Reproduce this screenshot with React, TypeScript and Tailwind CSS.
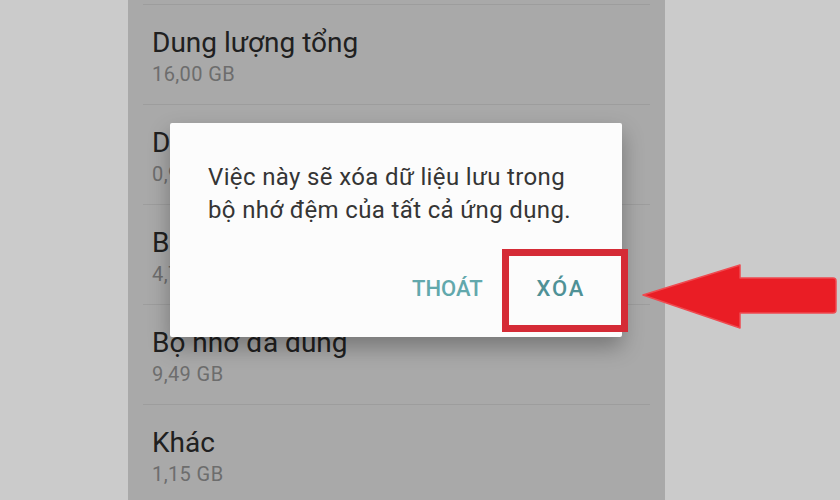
const rows = [
  { title: 'Dung lượng tổng', value: '16,00 GB' },
  { title: 'Dữ liệu bộ nhớ đệm', value: '0,95 GB' },
  { title: 'Bộ nhớ khả dụng', value: '4,71 GB' },
  { title: 'Bộ nhớ đã dùng', value: '9,49 GB' },
  { title: 'Khác', value: '1,15 GB' },
];

function StorageRow({ title, value }: { title: string; value: string }) {
  return (
    <div className="h-[100px] border-b border-[#9d9d9d] pl-[9px] pt-[22px]">
      <div className="text-[28px] leading-[32px] text-[#202020]">{title}</div>
      <div className="mt-[3px] text-[20px] leading-[24px] tracking-[0.02em] text-[#6d6d6d]">{value}</div>
    </div>
  );
}

function ClearCacheDialog() {
  return (
    <div className="absolute left-[42px] top-[123px] h-[214px] w-[452px] rounded-[2px] bg-[#fcfcfc] pl-[38px] pt-[38px] shadow-[0_10px_22px_rgba(0,0,0,0.3)]">
      <p className="text-[24px] leading-[33px] tracking-[0.015em] text-[#353535]">
        Việc này sẽ xóa dữ liệu lưu trong
        <br />
        bộ nhớ đệm của tất cả ứng dụng.
      </p>
      <div className="mt-[50px] flex justify-end gap-[54px] pr-[37px] text-[22px] font-medium leading-[24px]">
        <button type="button" className="text-[#62a8ac]">
          THOÁT
        </button>
        <button type="button" className="tracking-[0.08em] text-[#4f9196]">
          XÓA
        </button>
      </div>
    </div>
  );
}

export default function App() {
  return (
    <div
      className="relative flex h-[500px] w-[840px] overflow-hidden bg-[#cbcbcb]"
      style={{ fontFamily: 'Roboto, "Noto Sans", sans-serif' }}
    >
      <div className="w-[128px] shrink-0" />

      {/* Phone screen, dimmed behind the dialog. */}
      <div className="relative w-[537px] shrink-0 bg-[#a9a9a9]">
        <div className="mx-[15px] mt-[4px] border-t border-[#9d9d9d]">
          {rows.map((r) => (
            <StorageRow key={r.title} {...r} />
          ))}
        </div>
        <ClearCacheDialog />
      </div>

      <div className="flex-1" />

      {/* Annotation: red frame around the confirm button. */}
      <div className="absolute left-[502px] top-[249px] h-[83px] w-[126px] border-[7px] border-[#d52b36]" />

      {/* Annotation: red arrow pointing at it. */}
      <svg className="absolute left-0 top-0" width="840" height="500" viewBox="0 0 840 500">
        <path
          d="M643 295 L740 265 L740 278 L833 278 Q836 278 836 281 L836 310 Q836 313 833 313 L740 313 L740 328 Z"
          fill="#ea1d25"
          stroke="#ef4a50"
          strokeWidth="1.5"
          strokeLinejoin="round"
        />
      </svg>
    </div>
  );
}
